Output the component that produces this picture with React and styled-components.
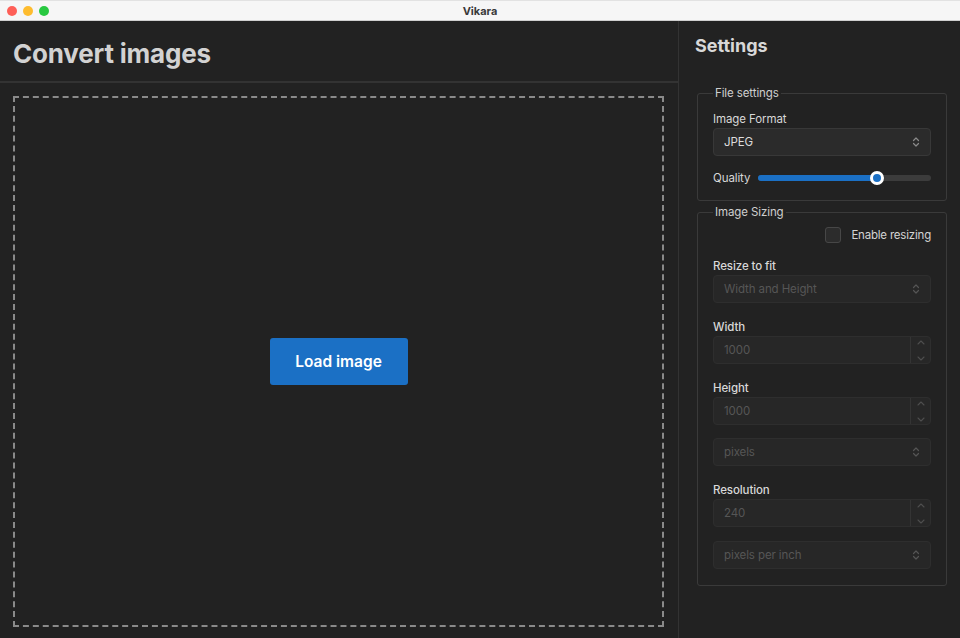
import React from "react";
import styled, { createGlobalStyle } from "styled-components";

const Global = createGlobalStyle`
  html, body { margin: 0; padding: 0; background: #222222; }
  body { font-family: Inter, "Noto Sans", "Liberation Sans", sans-serif; }
  * { box-sizing: border-box; }
`;

const Window = styled.div`
  width: 960px;
  height: 638px;
  display: flex;
  flex-direction: column;
  background: #222222;
  overflow: hidden;
`;

const TitleBar = styled.div`
  height: 21px;
  flex: none;
  display: flex;
  align-items: center;
  position: relative;
  background: #f6f6f6;
  border-bottom: 1px solid #cfcfcf;
  border-top: 1px solid #e2e2e2;
`;

const Lights = styled.div`
  display: flex;
  gap: 6px;
  padding-left: 7px;
`;

const Light = styled.span`
  width: 10px;
  height: 10px;
  border-radius: 50%;
  background: ${(p) => p.$c};
`;

const WinTitle = styled.div`
  position: absolute;
  left: 0;
  right: 0;
  text-align: center;
  font-size: 11px;
  font-weight: 700;
  color: #3a3a3a;
`;

const Main = styled.div`
  flex: 1;
  display: flex;
  min-height: 0;
`;

const LeftPanel = styled.section`
  width: 679px;
  flex: none;
  display: flex;
  flex-direction: column;
  border-right: 1px solid #333333;
`;

const Header = styled.header`
  height: 62px;
  flex: none;
  display: flex;
  align-items: center;
  padding: 4px 13px 0;
  border-bottom: 2px solid #333333;
`;

const Title = styled.h1`
  margin: 0;
  font-size: 26px;
  font-weight: 700;
  color: #d2d2d2;
  letter-spacing: -0.2px;
`;

const DropArea = styled.div`
  flex: 1;
  padding: 13px 14px 11px 13px;
  display: flex;
`;

const DropZone = styled.div`
  flex: 1;
  border: 2px dashed #8a8a8a;
  display: flex;
  align-items: center;
  justify-content: center;
`;

const PrimaryButton = styled.button`
  width: 138px;
  height: 47px;
  border: none;
  border-radius: 3px;
  background: #1b70c5;
  color: #ffffff;
  font-family: inherit;
  font-size: 15.5px;
  font-weight: 600;
  cursor: pointer;
`;

const RightPanel = styled.aside`
  flex: 1;
  padding: 13px 13px 0 18px;
  display: flex;
  flex-direction: column;
`;

const PanelTitle = styled.h2`
  margin: 0 0 0 -2px;
  font-size: 18px;
  font-weight: 700;
  color: #d8d8d8;
  line-height: 24px;
`;

const Group = styled.fieldset`
  margin: ${(p) => p.$mt}px 0 0 0;
  padding: ${(p) => p.$pt}px 15px ${(p) => p.$pb}px 15px;
  border: 1px solid #3a3a3a;
  border-radius: 3px;
  display: flex;
  flex-direction: column;
`;

const Legend = styled.legend`
  padding: 0 2px;
  font-size: 11.5px;
  letter-spacing: -0.1px;
  color: #cfcfcf;
  line-height: 16px;
`;

const Field = styled.div`
  display: flex;
  flex-direction: column;
  gap: 1px;
  margin-top: ${(p) => p.$mt || 0}px;
`;

const Label = styled.label`
  font-size: 11.5px;
  letter-spacing: -0.1px;
  line-height: 16px;
  font-weight: ${(p) => (p.$strong ? 500 : 400)};
  color: #d8d8d8;
`;

const SelectBox = styled.div`
  height: 28px;
  border-radius: 4px;
  border: 1px solid ${(p) => (p.$disabled ? "#2e2e2e" : "#383838")};
  background: ${(p) => (p.$disabled ? "#272727" : "#2b2b2b")};
  display: flex;
  align-items: center;
  justify-content: space-between;
  padding: 0 10px 0 10px;
  font-size: 11.5px;
  letter-spacing: -0.1px;
  color: ${(p) => (p.$disabled ? "#565656" : "#dcdcdc")};
  margin-top: ${(p) => p.$mt || 0}px;
`;

const NumberBox = styled.div`
  height: 28px;
  border-radius: 4px;
  border: 1px solid #2e2e2e;
  background: #272727;
  display: flex;
  align-items: stretch;
  font-size: 11.5px;
  letter-spacing: -0.1px;
  color: #565656;
`;

const NumberValue = styled.div`
  flex: 1;
  display: flex;
  align-items: center;
  padding-left: 10px;
`;

const Stepper = styled.div`
  width: 20px;
  border-left: 1px solid #343434;
  display: flex;
  flex-direction: column;
  align-items: center;
  justify-content: space-between;
  padding: 3px 0 2px;
`;

const QualityRow = styled.div`
  display: flex;
  align-items: center;
  gap: 8px;
  margin-top: 13px;
  height: 18px;
`;

const Track = styled.div`
  flex: 1;
  height: 6px;
  border-radius: 3px;
  background: #3c3c3c;
  position: relative;
`;

const Fill = styled.div`
  height: 100%;
  border-radius: 3px;
  background: #1b70c5;
`;

const Thumb = styled.span`
  position: absolute;
  top: 50%;
  width: 14px;
  height: 14px;
  margin: -7px 0 0 -7px;
  border-radius: 50%;
  background: #1b70c5;
  border: 3px solid #ffffff;
`;

const CheckRow = styled.div`
  display: flex;
  justify-content: flex-end;
  align-items: center;
  gap: 10px;
  margin-top: 1px;
  margin-bottom: 15px;
`;

const CheckBox = styled.span`
  width: 16px;
  height: 16px;
  border-radius: 3px;
  border: 1px solid #474747;
  background: #2c2c2c;
`;

const CheckText = styled.span`
  font-size: 11.5px;
  letter-spacing: -0.2px;
  color: #d4d4d4;
`;

const UpDown = ({ color }) => (
  <svg width="8" height="12" viewBox="0 0 8 12" fill="none" stroke={color} strokeWidth="1.2" strokeLinecap="round" strokeLinejoin="round">
    <path d="M1.5 4.5 L4 2 L6.5 4.5" />
    <path d="M1.5 7.5 L4 10 L6.5 7.5" />
  </svg>
);

const Chevron = ({ up }) => (
  <svg width="8" height="5" viewBox="0 0 8 5" fill="none" stroke="#4e4e4e" strokeWidth="1.1" strokeLinecap="round" strokeLinejoin="round">
    <path d={up ? "M1 4 L4 1 L7 4" : "M1 1 L4 4 L7 1"} />
  </svg>
);

const Select = ({ value, disabled, mt }) => (
  <SelectBox $disabled={disabled} $mt={mt}>
    <span>{value}</span>
    <UpDown color={disabled ? "#555" : "#8a8a8a"} />
  </SelectBox>
);

const NumberInput = ({ value }) => (
  <NumberBox>
    <NumberValue>{value}</NumberValue>
    <Stepper>
      <Chevron up />
      <Chevron />
    </Stepper>
  </NumberBox>
);

export default function App() {
  const quality = 118 / 172;
  return (
    <>
      <Global />
      <Window>
        <TitleBar>
          <Lights>
            <Light $c="#fe5f57" />
            <Light $c="#febc2e" />
            <Light $c="#28c840" />
          </Lights>
          <WinTitle>Vikara</WinTitle>
        </TitleBar>
        <Main>
          <LeftPanel>
            <Header>
              <Title>Convert images</Title>
            </Header>
            <DropArea>
              <DropZone>
                <PrimaryButton>Load image</PrimaryButton>
              </DropZone>
            </DropArea>
          </LeftPanel>
          <RightPanel>
            <PanelTitle>Settings</PanelTitle>
            <Group $mt={27} $pt={8} $pb={13}>
              <Legend>File settings</Legend>
              <Field $mt={2}>
                <Label>Image Format</Label>
                <Select value="JPEG" />
              </Field>
              <QualityRow>
                <Label>Quality</Label>
                <Track>
                  <Fill style={{ width: `${quality * 100}%` }} />
                  <Thumb style={{ left: `${quality * 100}%` }} />
                </Track>
              </QualityRow>
            </Group>
            <Group $mt={3} $pt={6} $pb={16}>
              <Legend>Image Sizing</Legend>
              <CheckRow>
                <CheckBox />
                <CheckText>Enable resizing</CheckText>
              </CheckRow>
              <Field>
                <Label $strong>Resize to fit</Label>
                <Select value="Width and Height" disabled />
              </Field>
              <Field $mt={16}>
                <Label $strong>Width</Label>
                <NumberInput value="1000" />
              </Field>
              <Field $mt={16}>
                <Label $strong>Height</Label>
                <NumberInput value="1000" />
              </Field>
              <Select value="pixels" disabled mt={13} />
              <Field $mt={16}>
                <Label $strong>Resolution</Label>
                <NumberInput value="240" />
              </Field>
              <Select value="pixels per inch" disabled mt={14} />
            </Group>
          </RightPanel>
        </Main>
      </Window>
    </>
  );
}
